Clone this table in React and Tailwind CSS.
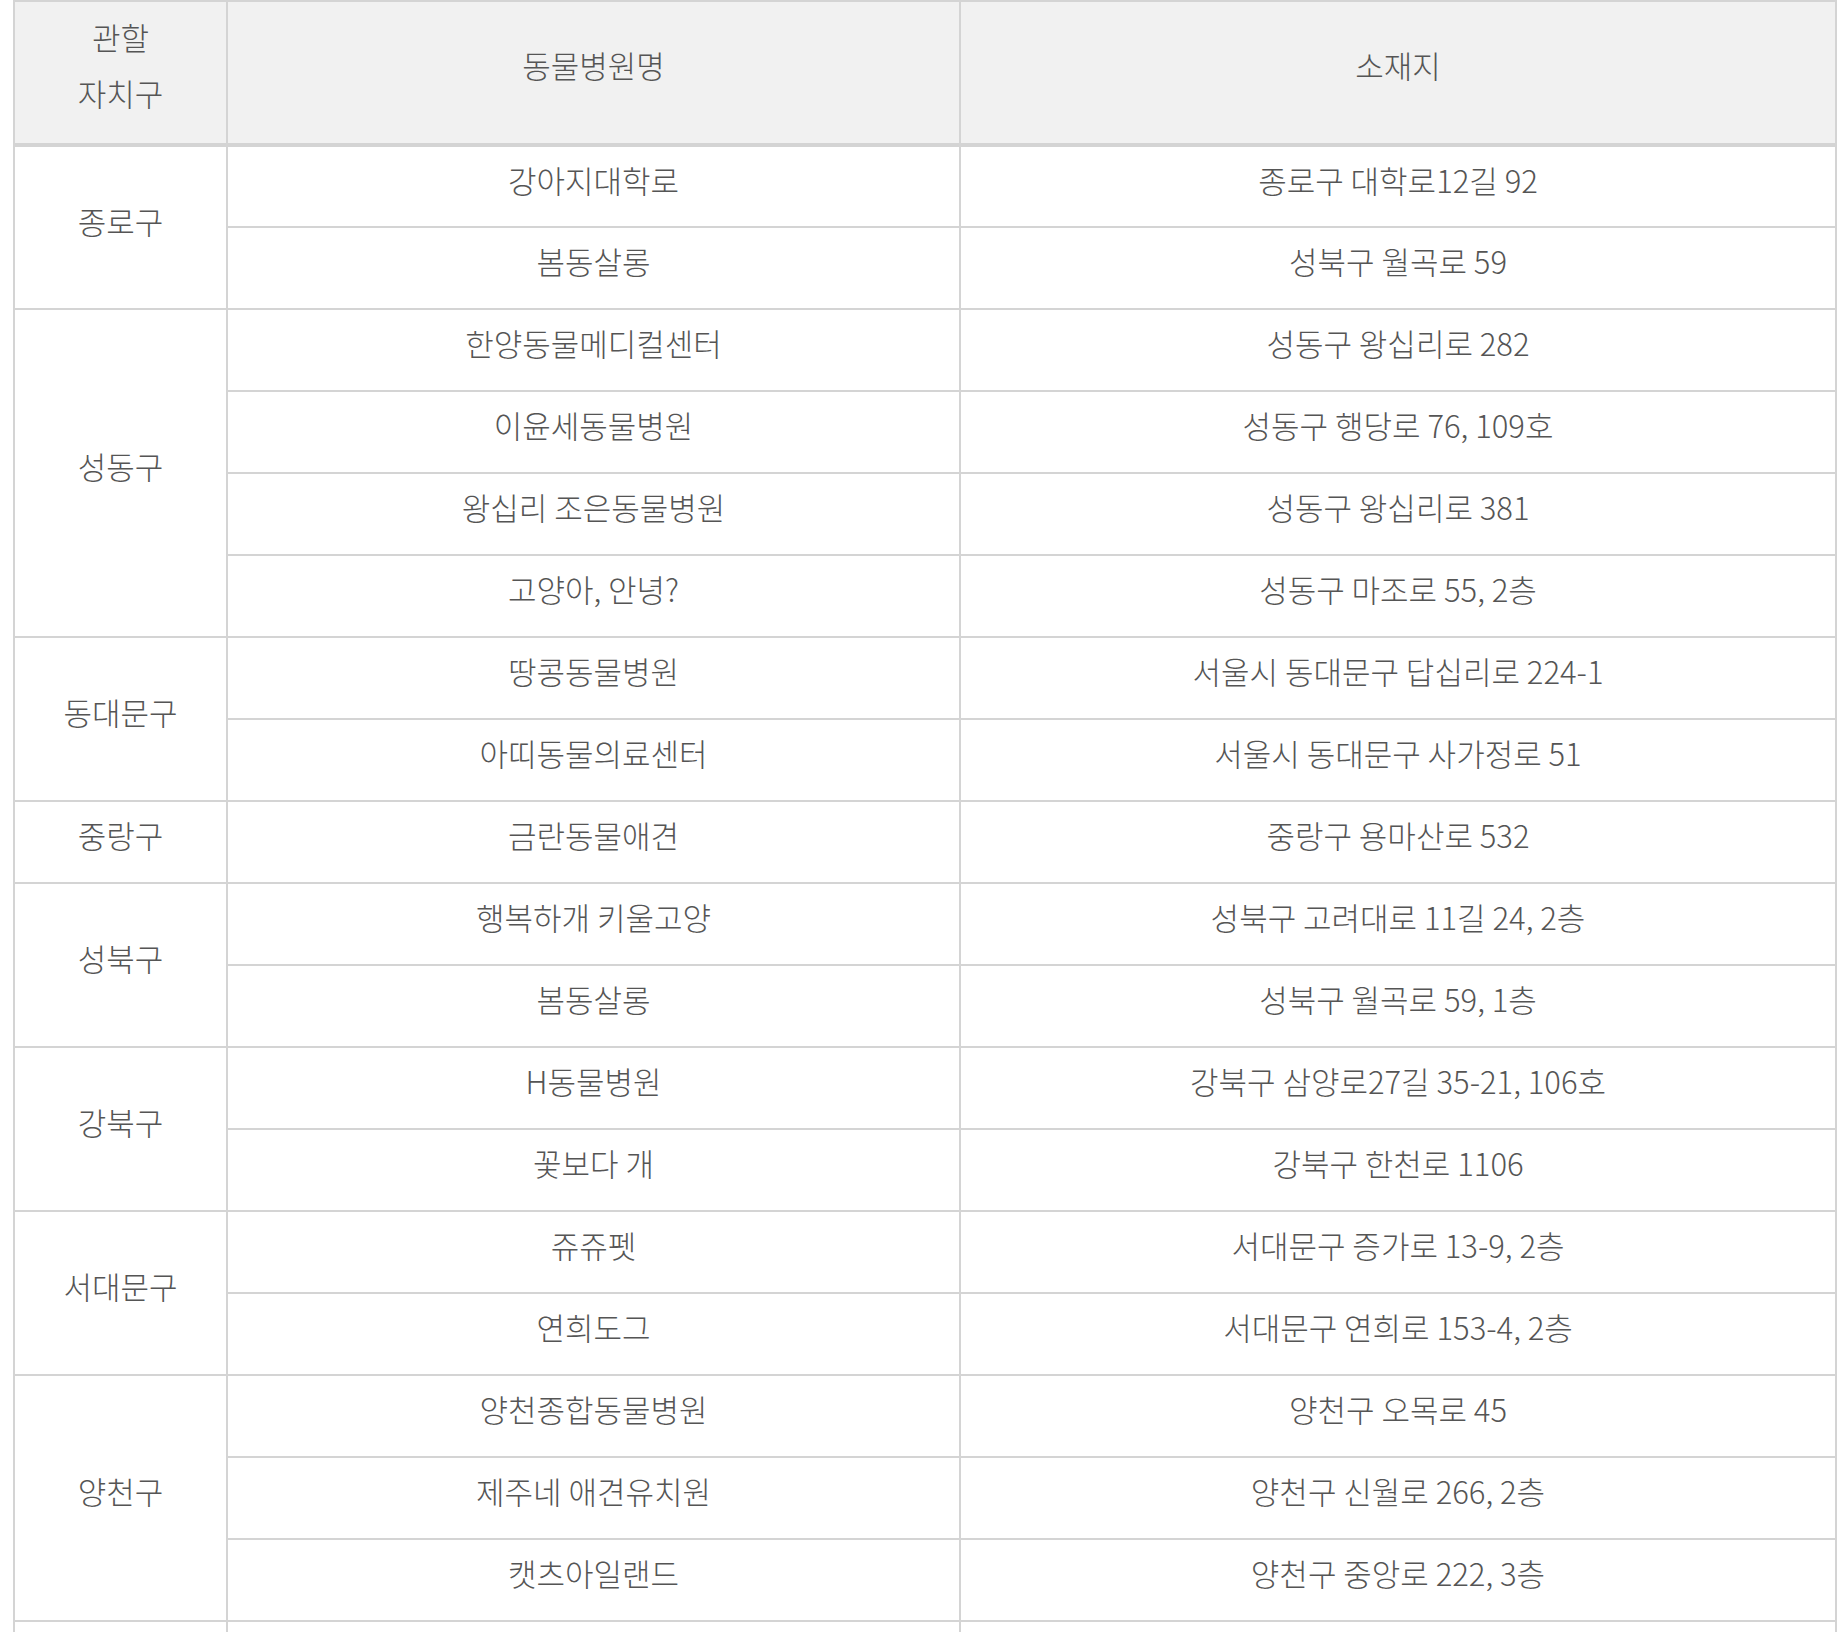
const groups = [
  {
    district: "종로구",
    rows: [
      ["강아지대학로", "종로구 대학로12길 92"],
      ["봄동살롱", "성북구 월곡로 59"],
    ],
  },
  {
    district: "성동구",
    rows: [
      ["한양동물메디컬센터", "성동구 왕십리로 282"],
      ["이윤세동물병원", "성동구 행당로 76, 109호"],
      ["왕십리 조은동물병원", "성동구 왕십리로 381"],
      ["고양아, 안녕?", "성동구 마조로 55, 2층"],
    ],
  },
  {
    district: "동대문구",
    rows: [
      ["땅콩동물병원", "서울시 동대문구 답십리로 224-1"],
      ["아띠동물의료센터", "서울시 동대문구 사가정로 51"],
    ],
  },
  {
    district: "중랑구",
    rows: [["금란동물애견", "중랑구 용마산로 532"]],
  },
  {
    district: "성북구",
    rows: [
      ["행복하개 키울고양", "성북구 고려대로 11길 24, 2층"],
      ["봄동살롱", "성북구 월곡로 59, 1층"],
    ],
  },
  {
    district: "강북구",
    rows: [
      ["H동물병원", "강북구 삼양로27길 35-21, 106호"],
      ["꽃보다 개", "강북구 한천로 1106"],
    ],
  },
  {
    district: "서대문구",
    rows: [
      ["쥬쥬펫", "서대문구 증가로 13-9, 2층"],
      ["연희도그", "서대문구 연희로 153-4, 2층"],
    ],
  },
  {
    district: "양천구",
    rows: [
      ["양천종합동물병원", "양천구 오목로 45"],
      ["제주네 애견유치원", "양천구 신월로 266, 2층"],
      ["캣츠아일랜드", "양천구 중앙로 222, 3층"],
    ],
  },
];

const cell =
  "border-2 border-[#d4d4d4] text-center align-middle font-light h-[82px] pt-0 pb-[14px] px-2";
const head =
  "border-2 border-b-4 border-[#d4d4d4] font-light h-[144px] pt-0 pb-[16px]";

export default function App() {
  return (
    <div
      className="min-h-screen bg-white text-[#555] text-[31px] leading-[56px]"
      style={{ fontFamily: '"Noto Sans CJK KR", "Noto Sans", sans-serif' }}
    >
      <table className="ml-[13px] w-[1824px] table-fixed border-collapse">
        <colgroup>
          <col className="w-[213px]" />
          <col className="w-[733px]" />
          <col />
        </colgroup>
        <thead>
          <tr className="bg-[#f1f1f1]">
            <th className={head}>
              관할
              <br />
              자치구
            </th>
            <th className={head}>동물병원명</th>
            <th className={head}>소재지</th>
          </tr>
        </thead>
        <tbody>
          {groups.map((g) =>
            g.rows.map((r, i) => (
              <tr key={g.district + i}>
                {i === 0 && (
                  <td className={cell} rowSpan={g.rows.length}>
                    {g.district}
                  </td>
                )}
                <td className={cell}>{r[0]}</td>
                <td className={cell}>{r[1]}</td>
              </tr>
            ))
          )}
          <tr>
            <td className={cell}></td>
            <td className={cell}></td>
            <td className={cell}></td>
          </tr>
        </tbody>
      </table>
    </div>
  );
}
